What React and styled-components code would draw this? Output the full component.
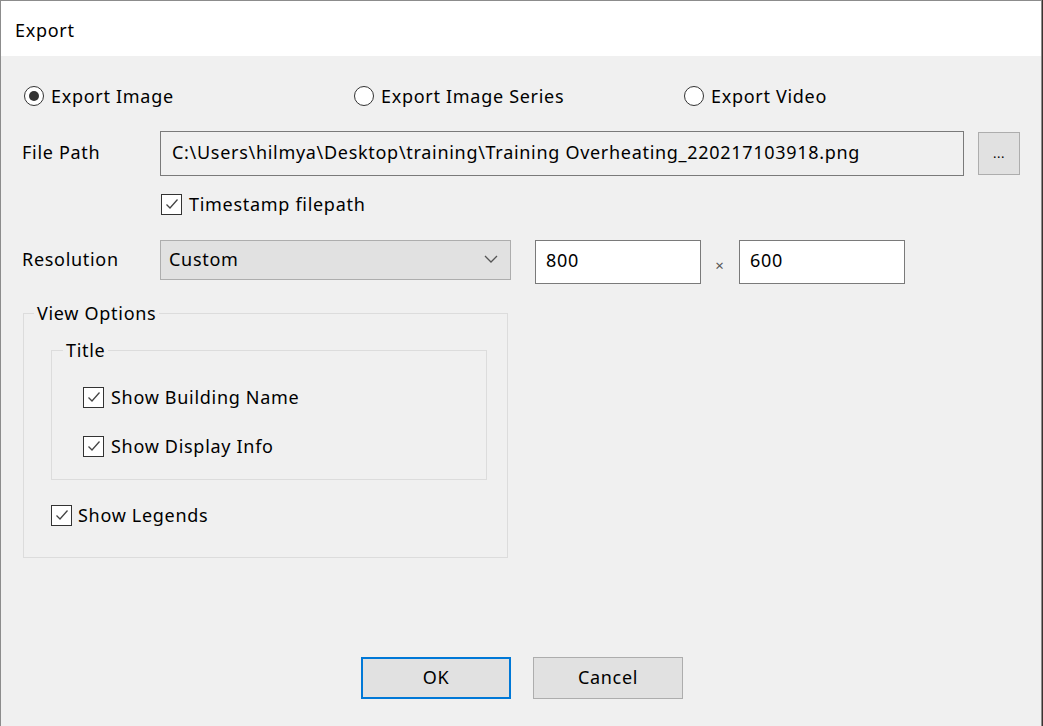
import React from "react";
import styled, { createGlobalStyle } from "styled-components";

const Global = createGlobalStyle`
  html, body { margin: 0; padding: 0; }
  body {
    background: #3b3230;
    font-family: "Noto Sans", "Segoe UI", sans-serif;
    font-size: 18px;
    letter-spacing: 0.7px;
    color: #000;
    overflow: hidden;
  }
  * { box-sizing: border-box; }
`;

const Window = styled.div`
  width: 1042px;
  height: 726px;
  border: 1px solid #8c8c8c;
  border-bottom: none;
  background: #f0f0f0;
  display: flex;
  flex-direction: column;
`;

const TitleBar = styled.div`
  height: 55px;
  background: #fff;
  display: flex;
  align-items: center;
  padding-left: 14px;
  padding-top: 2px;
  font-size: 18px;
`;

const Body = styled.div`
  flex: 1;
  display: flex;
  flex-direction: column;
  padding: 30px 0 27px 0;
`;

const RadioRow = styled.div`
  display: grid;
  grid-template-columns: repeat(3, 330px);
  padding-left: 23px;
  height: 20px;
  align-items: center;
`;

const Choice = styled.label`
  display: flex;
  align-items: center;
  gap: 7px;
  line-height: 20px;
  white-space: nowrap;
`;

const RadioCircle = styled.span`
  width: 20px;
  height: 20px;
  border-radius: 50%;
  border: 1.5px solid #333;
  background: #fff;
  display: flex;
  align-items: center;
  justify-content: center;
  flex-shrink: 0;
  &::after {
    content: "";
    width: 10px;
    height: 10px;
    border-radius: 50%;
    background: #333;
    display: ${(p) => (p.$on ? "block" : "none")};
  }
`;

const CheckBox = styled.span`
  width: 21px;
  height: 21px;
  border: 1.5px solid #333;
  background: #fff;
  display: flex;
  align-items: center;
  justify-content: center;
  flex-shrink: 0;
`;

const FormRow = styled.div`
  display: flex;
  align-items: ${(p) => p.$align || "center"};
  padding-left: 21px;
  margin-top: ${(p) => p.$mt}px;
  height: ${(p) => p.$h}px;
`;

const Label = styled.div`
  width: 138px;
  flex-shrink: 0;
  padding-top: ${(p) => p.$pt || 0}px;
  padding-bottom: ${(p) => p.$pb || 0}px;
`;

const TextBox = styled.div`
  height: ${(p) => p.$h || 44}px;
  width: ${(p) => p.$w}px;
  border: 1px solid #7a7a7a;
  background: ${(p) => (p.$readonly ? "#f0f0f0" : "#fff")};
  display: flex;
  align-items: center;
  padding-left: ${(p) => p.$pl || 10}px;
  padding-bottom: 4px;
  white-space: nowrap;
  overflow: hidden;
`;

const SmallButton = styled.div`
  margin-left: 14px;
  width: 42px;
  height: 43px;
  background: #e1e1e1;
  border: 1.5px solid #adadad;
  display: flex;
  align-items: center;
  justify-content: center;
  font-size: 13px;
  letter-spacing: 0.5px;
  padding-bottom: 2px;
`;

const Combo = styled.div`
  width: 351px;
  height: 40px;
  background: #e1e1e1;
  border: 1.5px solid #adadad;
  display: flex;
  align-items: center;
  justify-content: space-between;
  padding: 0 12px 2px 8px;
`;

const Spacer = styled.div`
  width: 24px;
`;

const Times = styled.span`
  width: 38px;
  align-self: center;
  text-align: center;
  font-size: 15px;
  color: #555;
  padding-top: 5px;
`;

const Indent = styled.div`
  padding-left: 160px;
  margin-top: 17px;
`;

const Group = styled.fieldset`
  margin: ${(p) => p.$m};
  width: ${(p) => p.$w}px;
  border: 1px solid #dcdcdc;
  padding: 0;
  min-width: 0;
`;

const GroupContent = styled.div`
  padding: 0 0 ${(p) => p.$pb}px ${(p) => p.$pl}px;
`;

const Legend = styled.legend`
  margin-left: ${(p) => p.$ml || 10}px;
  padding: 0 3px;
  line-height: 22px;
  height: 22px;
`;

const CheckRow = styled.div`
  margin-top: ${(p) => p.$mt}px;
  height: 22px;
  display: flex;
  align-items: center;
`;

const CheckChoice = styled.label`
  display: flex;
  align-items: center;
  gap: ${(p) => p.$gap || 7}px;
  white-space: nowrap;
`;

const Buttons = styled.div`
  margin-top: auto;
  display: flex;
  justify-content: center;
  gap: 22px;
  padding-left: 2px;
`;

const DialogButton = styled.div`
  width: 150px;
  height: 42px;
  background: #e1e1e1;
  border: ${(p) => (p.$default ? "2px solid #0078d7" : "1.5px solid #adadad")};
  display: flex;
  align-items: center;
  justify-content: center;
  padding-bottom: 2px;
`;

const Check = () => (
  <CheckBox>
    <svg width="16" height="16" viewBox="0 0 16 16">
      <polyline points="2.5,8.5 6,12 13.5,3.5" fill="none" stroke="#444" strokeWidth="1.3" />
    </svg>
  </CheckBox>
);

const Chevron = () => (
  <svg width="14" height="8" viewBox="0 0 14 8">
    <polyline points="1,1 7,7 13,1" fill="none" stroke="#555" strokeWidth="1.3" />
  </svg>
);

export default function App() {
  return (
    <>
      <Global />
      <Window>
        <TitleBar>Export</TitleBar>
        <Body>
          <RadioRow>
            <Choice><RadioCircle $on />Export Image</Choice>
            <Choice><RadioCircle />Export Image Series</Choice>
            <Choice><RadioCircle />Export Video</Choice>
          </RadioRow>

          <FormRow $mt={25} $h={45}>
            <Label $pb={4}>File Path</Label>
            <TextBox $w={804} $h={45} $readonly $pl={11}>
              C:\Users\hilmya\Desktop\training\Training Overheating_220217103918.png
            </TextBox>
            <SmallButton>...</SmallButton>
          </FormRow>

          <Indent>
            <CheckRow $mt={0}>
              <CheckChoice><Check />Timestamp filepath</CheckChoice>
            </CheckRow>
          </Indent>

          <FormRow $mt={25} $h={44} $align="flex-start">
            <Label $pt={7}>Resolution</Label>
            <Combo>
              <span>Custom</span>
              <Chevron />
            </Combo>
            <Spacer />
            <TextBox $w={166}>800</TextBox>
            <Times>×</Times>
            <TextBox $w={166}>600</TextBox>
          </FormRow>

          <Group $m="18px 0 0 22px" $w={485}>
            <Legend>View Options</Legend>
            <GroupContent $pb={31} $pl={27}>
              <Group $m="15px 0 0 0" $w={436}>
                <Legend $ml={11}>Title</Legend>
                <GroupContent $pb={22} $pl={31}>
                  <CheckRow $mt={25}>
                    <CheckChoice><Check />Show Building Name</CheckChoice>
                  </CheckRow>
                  <CheckRow $mt={27}>
                    <CheckChoice><Check />Show Display Info</CheckChoice>
                  </CheckRow>
                </GroupContent>
              </Group>
              <CheckRow $mt={24}>
                <CheckChoice $gap={6}><Check />Show Legends</CheckChoice>
              </CheckRow>
            </GroupContent>
          </Group>

          <Buttons>
            <DialogButton $default>OK</DialogButton>
            <DialogButton>Cancel</DialogButton>
          </Buttons>
        </Body>
      </Window>
    </>
  );
}
